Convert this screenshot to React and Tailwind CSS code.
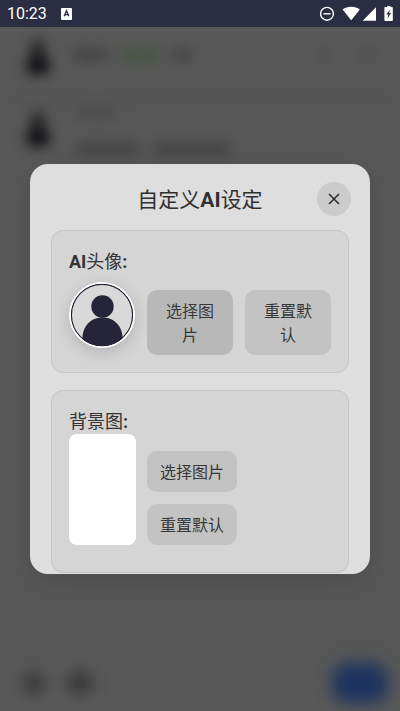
import React, { useState } from "react";

const FONT = "font-[Roboto,'Noto_Sans_CJK_SC',sans-serif]";

const StatusBar = () => (
  <div className="flex h-[27px] items-center justify-between bg-[#2b2d42] px-[7px] text-white">
    <div className="flex items-center gap-[14px]">
      <span className="text-base leading-[27px]">10:23</span>
      <svg className="h-3 w-[11px]" viewBox="0 0 11 12">
        <rect width="11" height="12" rx="1" fill="#fff" />
        <path d="M3.2 8.2 5.5 2.8 7.8 8.2M4 6.6h3" fill="none" stroke="#2b2d42" strokeWidth="1.4" />
      </svg>
    </div>
    <svg className="h-4 w-[73px]" viewBox="0 0 73 16" fill="#fff">
      <circle cx="7" cy="7.8" r="6.4" fill="none" stroke="#fff" strokeWidth="1.4" />
      <path d="M3.4 7.1h7.2v1.4H3.4z" />
      <path d="M22.6 3.4C27-.2 35.4-.2 39.8 3.4L31.2 14.2z" />
      <path d="M56 1.3V14.8H42.7z" />
      <path d="M67 1V0h3.5v1h1.3c.6 0 1 .4 1 1v12c0 .6-.4 1-1 1h-6.4c-.6 0-1-.4-1-1V2c0-.6.4-1 1-1z" />
      <path d="M69.8 3.4 66.4 8.6h1.9l-.7 4 3.4-5.5h-1.9z" fill="#2b2d42" />
    </svg>
  </div>
);

const ChatAvatar = () => (
  <svg className="h-10 w-7 shrink-0" viewBox="0 0 28 40" fill="#000004">
    <circle cx="14" cy="13" r="6" />
    <path d="M3 36c-3-20 25-20 22 0-2 3-20 3-22 0z" />
  </svg>
);

// dimmed conversation that lies under the dialog
const ChatBackdrop = () => (
  <div aria-hidden="true" className="absolute inset-0 flex flex-col overflow-hidden bg-[#585858]">
    <div className="flex items-center px-6 pt-2 pb-4 blur-[7px]">
      <ChatAvatar />
      <div className="ml-5 h-3 w-9 rounded bg-[#434343]" />
      <div className="ml-3 h-3 w-10 rounded bg-[#46543f]" />
      <div className="ml-3 h-3 w-5 rounded bg-[#434343]" />
      <div className="ml-auto h-4 w-4 rounded-full bg-[#505050]" />
      <div className="ml-7 h-4 w-4 rounded-full bg-[#505050]" />
    </div>
    <div className="h-4 bg-[#555555] blur-[7px]" />
    <div className="flex gap-6 px-6 blur-[7px]">
      <ChatAvatar />
      <div className="flex flex-col gap-6">
        <div className="h-3 w-10 rounded bg-[#4c4c4c]" />
        <div className="flex gap-3">
          <div className="h-3 w-16 rounded bg-[#434343]" />
          <div className="h-3 w-20 rounded bg-[#434343]" />
        </div>
      </div>
    </div>
    <div className="mt-auto h-3 bg-[#555555] blur-[7px]" />
    <div className="flex h-16 items-center gap-6 px-6 pt-2 blur-[8px]">
      <div className="h-5 w-5 rounded-full bg-[#303030]" />
      <div className="h-5 w-6 rounded-full bg-[#303030]" />
      <div className="-mr-3 ml-auto h-10 w-14 rounded-2xl bg-[#1c335f]" />
    </div>
  </div>
);

const PickButton = ({ children, active = false, onClick }) => (
  <button
    type="button"
    onClick={onClick}
    className={`rounded-[10px] px-[13px] pt-[10px] pb-[7px] text-base leading-6 text-[#383838] ${
      active ? "bg-[#b8b8b8]" : "bg-[#c3c3c3]"
    }`}
  >
    {children}
  </button>
);

const Card = ({ label, children }) => (
  <section className="rounded-xl border border-[#c6c6c6] bg-[#d5d5d5] p-[17px]">
    <h3 className="pt-[2px] text-lg leading-6 text-[#333333]">{label}</h3>
    {children}
  </section>
);

const App = () => {
  const [open, setOpen] = useState(true);

  return (
    <div className={`flex min-h-screen flex-col ${FONT}`}>
      <StatusBar />
      <main className="relative flex flex-1 items-center px-[30px]">
        <ChatBackdrop />
        {open && (
          <div
            role="dialog"
            aria-labelledby="dialog-title"
            className="relative w-full rounded-[18px] bg-[#dedede] px-[21px] pt-[18px] pb-px shadow-[0_8px_30px_rgba(0,0,0,0.14)]"
          >
            <div className="-mx-[2px] mb-[14px] grid grid-cols-[34px_1fr_34px] items-center">
              <h2 id="dialog-title" className="col-start-2 pt-[2px] text-center text-[21px] leading-8 text-[#303030]">
                自定义<b>AI</b>设定
              </h2>
              <button
                type="button"
                aria-label="关闭"
                onClick={() => setOpen(false)}
                className="flex h-[34px] w-[34px] items-center justify-center rounded-full bg-[#cbcbcb]"
              >
                <svg className="h-3 w-3" viewBox="0 0 12 12" fill="none" stroke="#303030" strokeWidth="1.6">
                  <path d="M1 1l10 10M11 1 1 11" />
                </svg>
              </button>
            </div>

            <div className="flex flex-col gap-[17px]">
              <Card label={<><b>AI</b>头像<b>:</b></>}>
                <div className="flex items-center gap-3">
                  <svg
                    className="h-[66px] w-[66px] shrink-0 rounded-full shadow-[0_4px_16px_rgba(0,0,0,0.16)]"
                    viewBox="0 0 66 66"
                  >
                    <clipPath id="face">
                      <circle cx="33" cy="33" r="31.5" />
                    </clipPath>
                    <circle cx="33" cy="33" r="32" fill="#d9d9d9" stroke="#fff" strokeWidth="2" />
                    <circle cx="33" cy="33" r="30.6" fill="none" stroke="#252438" strokeWidth="1.2" />
                    <g clipPath="url(#face)" fill="#252438">
                      <circle cx="33.5" cy="24.5" r="11.2" />
                      <path d="M13.500 66V56c0-12 8.500-20.500 20-20.500S53.500 44 53.500 56v10z" />
                    </g>
                    <circle cx="33" cy="33" r="32.2" fill="none" stroke="#fff" strokeWidth="1.5" />
                  </svg>
                  <div className="mt-4 grid flex-1 grid-cols-2 gap-3">
                    <PickButton active>选择图片</PickButton>
                    <PickButton>重置默认</PickButton>
                  </div>
                </div>
              </Card>

              <Card label={<>背景图<b>:</b></>}>
                <div className="mb-[10px] flex items-center gap-[11px]">
                  <div className="h-[111px] w-[67px] shrink-0 rounded-lg bg-white" />
                  <div className="mt-4 flex flex-col gap-3">
                    <PickButton>选择图片</PickButton>
                    <PickButton>重置默认</PickButton>
                  </div>
                </div>
              </Card>
            </div>
          </div>
        )}
      </main>
    </div>
  );
};

export default App;
